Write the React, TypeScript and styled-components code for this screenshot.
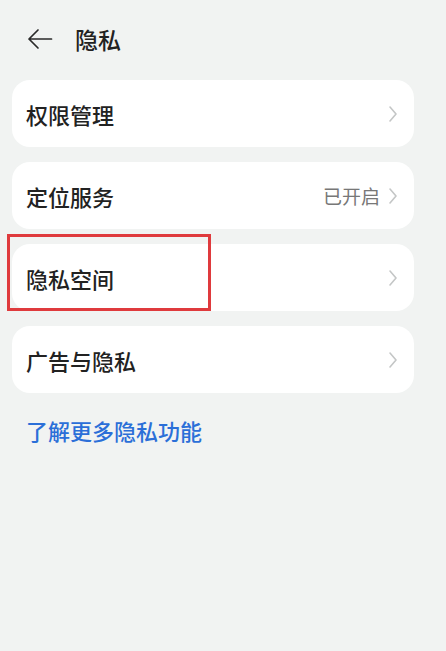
import { createGlobalStyle, styled } from "styled-components";

const GlobalStyle = createGlobalStyle`
  html, body {
    margin: 0;
    padding: 0;
    background: #f1f3f2;
  }
  body {
    font-family: "Noto Sans CJK SC", "Noto Sans", sans-serif;
  }
`;

type Item = { label: string; value?: string; marked?: boolean };

const items: Item[] = [
  { label: "权限管理" },
  { label: "定位服务", value: "已开启" },
  { label: "隐私空间", marked: true },
  { label: "广告与隐私" },
];

const Chevron = () => (
  <svg width="10" height="18" viewBox="0 0 10 18" fill="none">
    <path d="M2 2l6 7-6 7" stroke="#c4c6c6" strokeWidth="1.6" strokeLinecap="round" strokeLinejoin="round" />
  </svg>
);

const BackArrow = () => (
  <svg width="26" height="22" viewBox="0 0 26 22" fill="none">
    <path d="M24.5 11H2M11 2L2 11l9 9" stroke="#2a2a2a" strokeWidth="1.7" strokeLinecap="round" strokeLinejoin="round" />
  </svg>
);

const App = () => {
  return (
    <Page>
      <GlobalStyle />
      <Header>
        <BackArrow />
        <Title>隐私</Title>
      </Header>
      <List>
        {items.map((item) => (
          <Card key={item.label}>
            <Label>{item.label}</Label>
            <Right>
              {item.value && <Value>{item.value}</Value>}
              <Chevron />
            </Right>
            {item.marked && <Mark />}
          </Card>
        ))}
      </List>
      <Link>了解更多隐私功能</Link>
    </Page>
  );
};

export default App;

const Page = styled.div`
  width: 446px;
  height: 651px;
  background: #f1f3f2;
  padding: 0 32px 0 12px;
  box-sizing: border-box;
`;

const Header = styled.div`
  height: 80px;
  display: flex;
  align-items: center;
  gap: 22px;
  padding-left: 15px;
  padding-bottom: 2px;
  box-sizing: border-box;
`;

const Title = styled.div`
  font-size: 23px;
  font-weight: 500;
  color: #222;
`;

const List = styled.div`
  display: flex;
  flex-direction: column;
  gap: 15px;
`;

const Card = styled.div`
  position: relative;
  height: 67px;
  background: #ffffff;
  border-radius: 18px;
  display: flex;
  align-items: center;
  justify-content: space-between;
  padding: 0 16px 0 14px;
`;

const Label = styled.div`
  font-size: 22px;
  font-weight: 500;
  color: #222;
`;

const Right = styled.div`
  display: flex;
  align-items: center;
  gap: 8px;
`;

const Value = styled.div`
  font-size: 19px;
  color: #777;
`;

const Mark = styled.div`
  position: absolute;
  left: -5px;
  top: -10px;
  width: 204px;
  height: 77px;
  border: 3px solid #df3a3d;
  box-sizing: border-box;
  pointer-events: none;
`;

const Link = styled.div`
  margin-top: 21px;
  padding-left: 14px;
  font-size: 22px;
  font-weight: 500;
  color: #2b6fd8;
`;
